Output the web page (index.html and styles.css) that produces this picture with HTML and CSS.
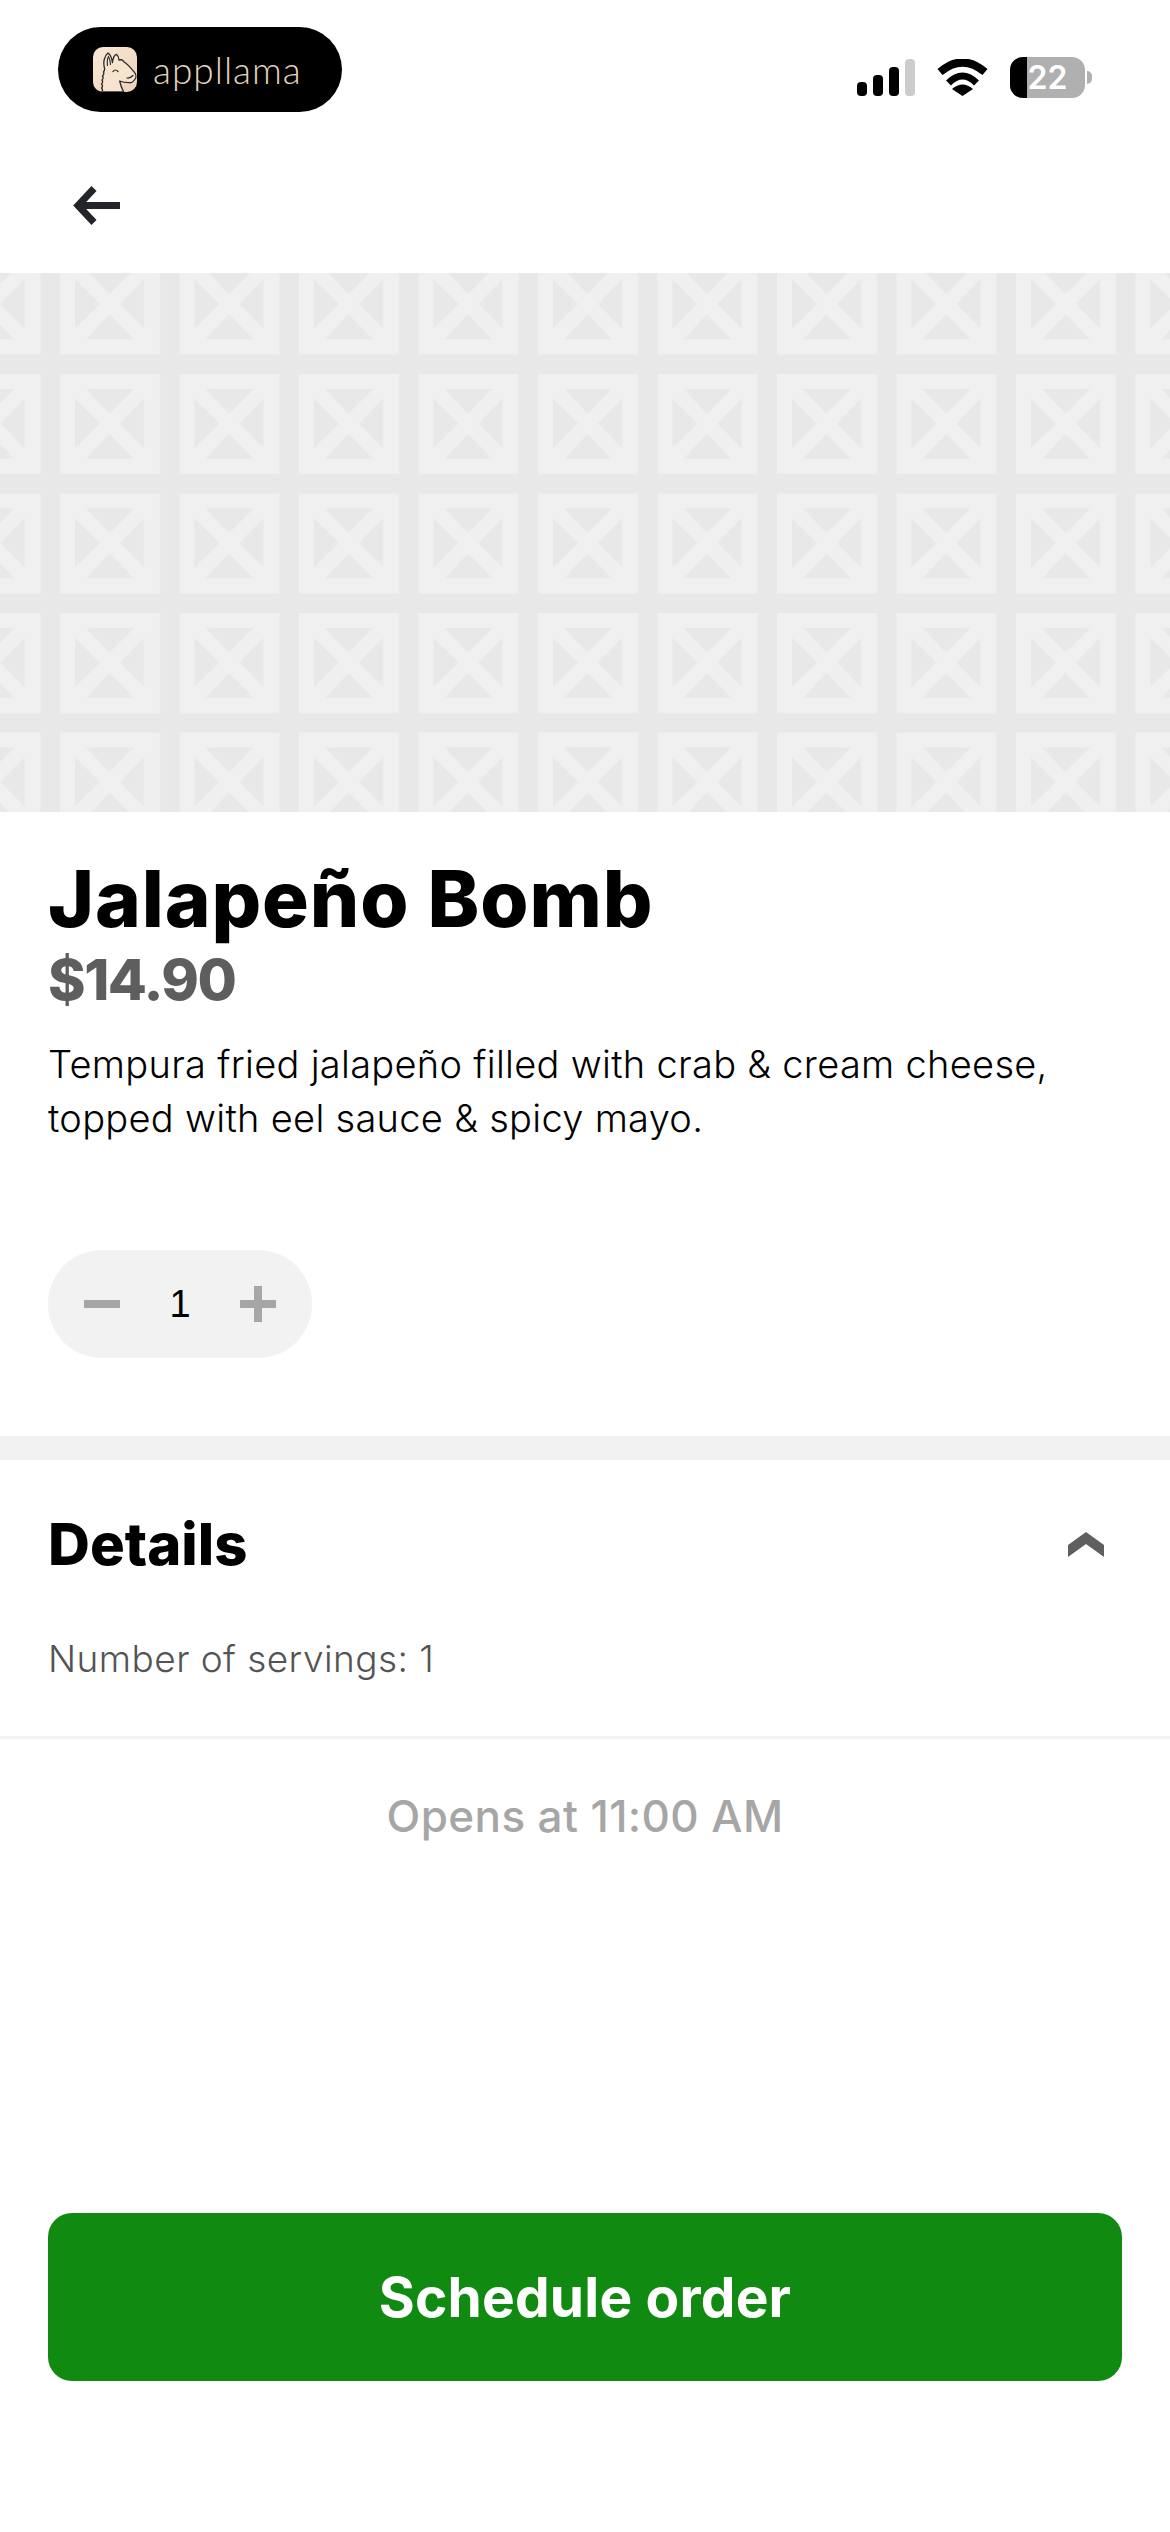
FILE: index.html
```html
<!DOCTYPE html>
<html lang="en">
<head>
    <meta charset="UTF-8">
    <meta name="viewport" content="width=device-width, initial-scale=1.0">
    <title>Jalapeño Bomb</title>
    <link rel="stylesheet" href="styles.css">
</head>
<body>
    <div class="container">
        <div class="status-bar">
            <div class="brand-pill">
                <svg class="brand-icon" width="44" height="45" viewBox="0 0 44 45">
                    <defs>
                        <linearGradient id="icon-bg" x1="0" y1="0" x2="1" y2="1">
                            <stop offset="0" stop-color="#f9e9d8"/>
                            <stop offset="1" stop-color="#ebd2b8"/>
                        </linearGradient>
                    </defs>
                    <rect width="44" height="45" fill="url(#icon-bg)"/>
                    <path d="M8.5 45 q2 -2 0 -4 q2 -2 0 -4 q2 -2 .5 -4 q2 -2 .5 -4 q2 -2 1 -4 q1.500 -2 1 -4 C10 16 11 9 15 6 C18 8 19 12 19.400 15.700 C20 11 21.500 8 23.400 7.300 C25.500 9 26 11 26 13 C28 12.500 30 13 30.500 14.500 C33 16 38 21 41.700 25.700 C43 27 43 30 42.700 31 C41 34 39 36 36.700 35.700 C33 35.800 29 35 26.700 34 C27.500 38 29 42 30.700 45 Z" fill="#f6e4cf" stroke="#2a2a2a" stroke-width="1.300" stroke-linejoin="round"/>
                    <path d="M14.500 19 C14 14 14.500 11 15.500 9.500 C17 12 17.500 15 17.500 18" fill="none" stroke="#2a2a2a" stroke-width="1.100"/>
                    <path d="M20 24.500 q2.500 -3 5 0 M34 31 q3 .5 6 -2.500" fill="none" stroke="#2a2a2a" stroke-width="1.200" stroke-linecap="round"/>
                </svg>
                <span class="brand-name">appllama</span>
            </div>
            <div class="status-icons">
                <svg width="58" height="38" viewBox="0 0 58 38">
                    <rect x="0" y="23" width="10" height="14" rx="4" fill="#000"/>
                    <rect x="16" y="16" width="10" height="21" rx="4" fill="#000"/>
                    <rect x="32" y="8" width="10" height="29" rx="4" fill="#000"/>
                    <rect x="48" y="0" width="10" height="37" rx="4" fill="#ccc"/>
                </svg>
                <svg width="51" height="38" viewBox="0 0 51 38">
                    <path d="M3 13 Q25.500 -6 48 13" fill="none" stroke="#000" stroke-width="8"/>
                    <path d="M11.500 24 Q25.500 10 39.500 24" fill="none" stroke="#000" stroke-width="7"/>
                    <path d="M25.500 37 L15 30 Q25.500 21 36 30 Z" fill="#000"/>
                </svg>
                <div class="battery">
                    <div class="battery-body">
                        <div class="battery-level"></div>
                        <span class="battery-text">22</span>
                    </div>
                    <div class="battery-tip"></div>
                </div>
            </div>
        </div>

        <div class="nav-bar">
            <svg width="50" height="42" viewBox="0 0 50 42">
                <path d="M50 21.500 H9 M24 4.500 L8 21.500 L24 38.500" fill="none" stroke="#23252a" stroke-width="7"/>
            </svg>
        </div>

        <svg class="hero" width="1170" height="539">
            <defs>
                <pattern id="tile" x="60" y="101" width="119.5" height="119.5" patternUnits="userSpaceOnUse">
                    <rect width="100" height="100" fill="#f0f0f0"/>
                    <path d="M15 25 V74 L40 49.500 Z M84 25 V74 L60 49.500 Z M26 15 H74 L49.500 39.500 Z M26 85 H74 L49.500 60 Z" fill="#e8e8e8"/>
                </pattern>
            </defs>
            <rect width="1170" height="539" fill="#e8e8e8"/>
            <rect width="1170" height="539" fill="url(#tile)"/>
        </svg>

        <div class="item-info">
            <h1 class="item-name">Jalapeño Bomb</h1>
            <div class="item-price">$14.90</div>
            <p class="item-desc">Tempura fried jalapeño filled with crab &amp; cream cheese, topped with eel sauce &amp; spicy mayo.</p>
            <div class="stepper">
                <svg width="36" height="36" viewBox="0 0 36 36"><rect y="14" width="36" height="8" fill="#a6a6a6"/></svg>
                <span class="stepper-count">1</span>
                <svg width="36" height="36" viewBox="0 0 36 36"><path d="M0 14 H14 V0 H22 V14 H36 V22 H22 V36 H14 V22 H0 Z" fill="#a6a6a6"/></svg>
            </div>
        </div>

        <div class="details">
            <div class="details-head">
                <h2 class="details-title">Details</h2>
                <svg width="36" height="25" viewBox="0 0 36 25"><path d="M18 0 L36 13 V25 L18 12 L0 25 V13 Z" fill="#5f5f5f"/></svg>
            </div>
            <p class="details-text">Number of servings: 1</p>
        </div>

        <div class="opens-at">Opens at 11:00 AM</div>

        <div class="footer">
            <button class="order-button">Schedule order</button>
        </div>
    </div>
</body>
</html>
```

FILE: styles.css
```css
* {
    box-sizing: border-box;
}

body {
    margin: 0;
    background-color: #fff;
    font-family: Inter, "Liberation Sans", sans-serif;
    color: #000;
}

.container {
    width: 1170px;
    height: 2532px;
    display: flex;
    flex-direction: column;
    overflow: hidden;
}

.status-bar {
    height: 130px;
    padding: 27px 78px 0 58px;
    display: flex;
    justify-content: space-between;
    align-items: flex-start;
}

.brand-pill {
    width: 284px;
    height: 85px;
    background-color: #000;
    border-radius: 43px;
    padding-left: 35px;
    display: flex;
    align-items: center;
    gap: 16px;
}

.brand-icon {
    border-radius: 10px;
}

.brand-name {
    font-family: Lato, sans-serif;
    font-weight: 300;
    font-size: 37px;
    letter-spacing: 1px;
    color: #e6d3be;
}

.status-icons {
    display: flex;
    align-items: center;
    gap: 22px;
    padding-top: 30px;
}

.battery {
    display: flex;
    align-items: center;
    gap: 2px;
}

.battery-body {
    position: relative;
    width: 75px;
    height: 41px;
    border-radius: 13px;
    background-color: #b0b0b0;
    overflow: hidden;
    display: flex;
    align-items: center;
    justify-content: center;
}

.battery-level {
    position: absolute;
    top: 0;
    left: 0;
    width: 17px;
    height: 100%;
    background-color: #000;
}

.battery-text {
    position: relative;
    font-size: 32px;
    font-weight: 600;
    color: #fff;
}

.battery-tip {
    width: 5px;
    height: 13px;
    border-radius: 0 6px 6px 0;
    background-color: #b0b0b0;
}

.nav-bar {
    height: 143px;
    padding: 54px 0 0 70px;
}

.hero {
    display: block;
    flex-shrink: 0;
}

.item-info {
    height: 648px;
    padding: 39px 48px 0;
    border-bottom: 24px solid #f2f2f2;
}

.item-name {
    margin: 0;
    font-size: 78px;
    font-weight: 800;
    line-height: 96px;
    letter-spacing: 0.9px;
}

.item-price {
    font-size: 57px;
    font-weight: 800;
    line-height: 66px;
    letter-spacing: -1.5px;
    color: #5e5e5e;
}

.item-desc {
    margin: 24px 0 0;
    font-size: 38px;
    font-weight: 350;
    line-height: 54px;
    letter-spacing: 0.3px;
}

.stepper {
    margin-top: 105px;
    width: 264px;
    height: 108px;
    border-radius: 54px;
    background-color: #f2f2f2;
    padding: 0 36px;
    display: flex;
    align-items: center;
    justify-content: space-between;
}

.stepper-count {
    font-family: "Liberation Sans", sans-serif;
    font-size: 38px;
}

.details {
    height: 279px;
    padding: 50px 48px 0;
    border-bottom: 3px solid #f2f2f2;
}

.details-head {
    display: flex;
    justify-content: space-between;
    align-items: center;
    padding-right: 18px;
}

.details-title {
    margin: 0;
    font-size: 58px;
    font-weight: 800;
    line-height: 68px;
}

.details-text {
    margin: 57px 0 0;
    font-size: 37px;
    font-weight: 350;
    line-height: 48px;
    letter-spacing: 0.45px;
    color: #545454;
}

.opens-at {
    margin-top: 49px;
    text-align: center;
    font-size: 44px;
    font-weight: 500;
    line-height: 56px;
    letter-spacing: 0.4px;
    color: #a6a6a6;
}

.footer {
    padding: 0 48px;
    margin-top: 369px;
}

.order-button {
    width: 100%;
    height: 168px;
    border: none;
    border-radius: 24px;
    background-color: #108a10;
    color: #fff;
    font-family: inherit;
    font-size: 55px;
    font-weight: 700;
    letter-spacing: 0.2px;
}
```
